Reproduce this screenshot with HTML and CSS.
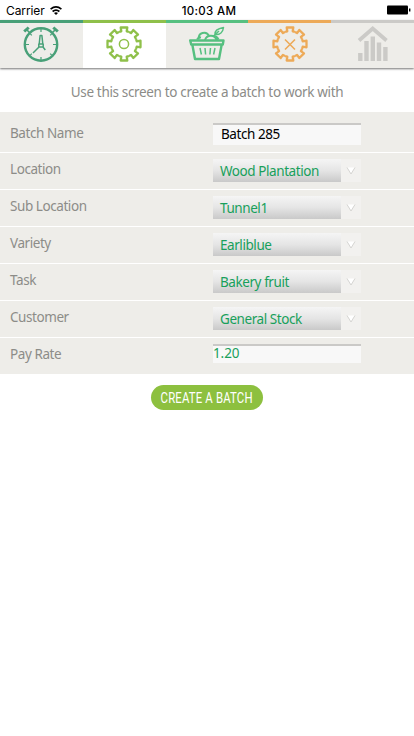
FILE: index.html
```html
<!DOCTYPE html>
<html lang="en">
<head>
    <meta charset="utf-8">
    <title>Create a batch</title>
    <link rel="stylesheet" href="styles.css">
</head>
<body>

<div class="status">
    <div class="carrier">
        <span>Carrier</span>
        <svg width="12" height="9" viewBox="0 0 12 9" fill="none" stroke="#000" stroke-width="1.7">
            <path d="M.6 3.2Q6-1.3 11.4 3.2M2.6 5.5Q6 2.7 9.4 5.5"/>
            <path d="M4 7Q6 5.4 8 7L6 9z" fill="#000" stroke="none"/>
        </svg>
    </div>
    <div class="time">10:03 AM</div>
    <svg class="battery" width="25" height="10" viewBox="0 0 25 10">
        <rect y=".5" width="21" height="9" rx="1"/>
        <rect x="22" y="3.5" width="1.4" height="3"/>
    </svg>
</div>

<div class="tabs">
    <a class="tab tab-clock">
        <svg width="36" height="36" viewBox="-18 -18 36 36">
            <circle r="16.2" cy=".5" stroke-width="2.4"/>
            <path stroke-width="3" d="M-16.8-12.5L-12.3-16.5M16.8-12.5L12.3-16.5"/>
            <path stroke-width="1.6" d="M-14.500-14.500L-11-11M14.500-14.500L11-11"/>
            <path stroke-width="1.2" d="M0-15v3M0 16v-3M-15 .5h3M15 .5h-3M-10.6-10l1.4 1.4M10.6-10l-1.4 1.4M10.6 11l-1.4-1.4M-10.6 11l1.4-1.4"/>
            <path stroke-width="1.5" d="M-1.8 0L-.9-8.500H.9L1.8 0M-2.2 0h4.4v3h-4.4zM-2 3L-8 9M2 3L4.3 6"/>
        </svg>
    </a>
    <a class="tab tab-batch active">
        <svg width="36" height="36" viewBox="-18 -18 36 36">
            <defs>
                <path id="tooth" d="M-4.97-12A13 13 0 0 1-2.7-12.7L-3.3-16.5H3.3L2.7-12.7A13 13 0 0 1 4.97-12"/>
                <g id="gear">
                    <use href="#tooth"/>
                    <use href="#tooth" transform="rotate(45)"/>
                    <use href="#tooth" transform="rotate(90)"/>
                    <use href="#tooth" transform="rotate(135)"/>
                    <use href="#tooth" transform="rotate(180)"/>
                    <use href="#tooth" transform="rotate(225)"/>
                    <use href="#tooth" transform="rotate(270)"/>
                    <use href="#tooth" transform="rotate(315)"/>
                </g>
            </defs>
            <use href="#gear"/>
            <circle r="4.6" stroke-width="1.5"/>
        </svg>
    </a>
    <a class="tab tab-basket">
        <svg width="36" height="36" viewBox="0 0 36 36">
            <path stroke-width="2.4" d="M1.2 14.500H34.500L33.800 18.500H2.200zM3.300 18.500L6 33H30L32.700 18.500"/>
            <path stroke-width="2" d="M10 13.500C8.500 6.500 17.500 4.500 20 10M16 14C17.500 8.500 26 8 27.500 14M8 13.500Q9 11 12 11.500M24 10Q27.500 9.500 29.500 13.500"/>
            <path stroke-width="1.5" d="M26 8.500C25.500 4.500 29 2.500 34.500 1.500C34 6 31 9 26 8.500L24.500 10.500M26 8.500L30 5"/>
            <path stroke-width="1.5" d="M11 22l1.400 6.500M16 22l.6 6.500M26 22l-1.400 6.500M21.500 22l-.6 6.500"/>
        </svg>
    </a>
    <a class="tab tab-stop">
        <svg width="36" height="36" viewBox="-18 -18 36 36">
            <use href="#gear"/>
            <path stroke-width="1.6" d="M-5-4.500L5 5.500M5-4.500L-5 5.500"/>
        </svg>
    </a>
    <a class="tab tab-stats">
        <svg width="36" height="36" viewBox="0 0 36 36">
            <path stroke-width="3.8" d="M4 14.500L17.700 2.600L31.500 14.500"/>
            <path stroke-width="4.400" d="M5.300 35V27M11.500 35V15M17.800 35V10.500M24 35V16.500M30.400 35V21"/>
        </svg>
    </a>
</div>

<p class="intro">Use this screen to create a batch to work with</p>

<div class="form">
    <div class="row row-name">
        <span class="label">Batch Name</span>
        <span class="field">Batch 285</span>
    </div>
    <div class="row">
        <span class="label">Location</span>
        <span class="select"><span class="value">Wood Plantation</span><svg class="arrow" viewBox="0 0 20 23"><path d="M6.500 8.500h7l-3.500 6z"/><path class="edge" d="M6 8.500l4 6.500 4-6.500"/></svg></span>
    </div>
    <div class="row">
        <span class="label">Sub Location</span>
        <span class="select"><span class="value">Tunnel1</span><svg class="arrow" viewBox="0 0 20 23"><path d="M6.500 8.500h7l-3.500 6z"/><path class="edge" d="M6 8.500l4 6.500 4-6.500"/></svg></span>
    </div>
    <div class="row">
        <span class="label">Variety</span>
        <span class="select"><span class="value">Earliblue</span><svg class="arrow" viewBox="0 0 20 23"><path d="M6.500 8.500h7l-3.500 6z"/><path class="edge" d="M6 8.500l4 6.500 4-6.500"/></svg></span>
    </div>
    <div class="row">
        <span class="label">Task</span>
        <span class="select"><span class="value">Bakery fruit</span><svg class="arrow" viewBox="0 0 20 23"><path d="M6.500 8.500h7l-3.500 6z"/><path class="edge" d="M6 8.500l4 6.500 4-6.500"/></svg></span>
    </div>
    <div class="row">
        <span class="label">Customer</span>
        <span class="select"><span class="value">General Stock</span><svg class="arrow" viewBox="0 0 20 23"><path d="M6.500 8.500h7l-3.500 6z"/><path class="edge" d="M6 8.500l4 6.500 4-6.500"/></svg></span>
    </div>
    <div class="row row-rate">
        <span class="label">Pay Rate</span>
        <span class="field">1.20</span>
    </div>
</div>

<a class="create"><span>CREATE A BATCH</span></a>

</body>
</html>
```
FILE: styles.css
```css
* { box-sizing: border-box; }
body { margin: 0; background: #fff; font-family: "Noto Sans", sans-serif; font-size: 13.5px; letter-spacing: -0.43px; color: #8c8c88; }

.status { display: grid; grid-template-columns: 1fr auto 1fr; align-items: center; height: 20px; padding: 0 6px; font-family: Inter, sans-serif; font-size: 12px; letter-spacing: 0; color: #000; }
.carrier { display: flex; align-items: center; gap: 5px; padding-top: 1px; }
.carrier span { letter-spacing: -0.1px; }
.time { font-weight: 500; font-size: 11.500px; letter-spacing: 0.3px; padding: 2px 0 0 4px; }
.battery { justify-self: end; margin-right: -4px; }

.tabs { display: grid; grid-template-columns: repeat(5, 1fr); height: 48px; background: #eeede9; box-shadow: 0 1px 2px rgba(0, 0, 0, 0.55); }
.tab { display: flex; justify-content: center; padding-top: 3px; border-top: 3px solid; }
.tab svg { fill: none; stroke: currentColor; stroke-width: 2.3; stroke-linejoin: round; }
.tab-clock { color: #48a078; }
.tab-batch { color: #8fc04a; }
.tab-basket { color: #56c080; }
.tab-stop { color: #edaa58; }
.tab-stats { color: #cbcac7; }
.tab-stats svg { stroke-linejoin: miter; }
.tab.active { background: #fff; }

.intro { margin: 0; height: 44px; line-height: 48px; text-align: center; letter-spacing: -0.34px; white-space: nowrap; }

.form { background: #eeede9; }
.row { display: flex; height: 37px; padding: 6px 0 0 10px; border-bottom: 1px solid #fff; }
.row-name { height: 41px; padding-top: 11px; }
.row-rate { height: 36px; border-bottom: none; }
.label { width: 203px; line-height: 20px; }
.select { display: flex; width: 148px; height: 23px; background: #f2f1ef; color: #18a05b; }
.value { width: 128px; padding-left: 7px; line-height: 24px; background: linear-gradient(#f5f5f5, #e5e5e5 50%, #c9c9c9); white-space: nowrap; }
.arrow { width: 20px; height: 23px; fill: #fff; }
.arrow .edge { fill: none; stroke: #c9c8c6; stroke-width: 0.7; }
.field { width: 148px; height: 22px; border-top: 2px solid #cac9c7; background: #f8f8f8; }
.row-name .field { padding-left: 8px; line-height: 19px; color: #000; }
.row-rate .field { height: 19px; line-height: 15px; letter-spacing: -0.1px; color: #18a05b; }

.create { display: flex; align-items: center; justify-content: center; width: 112px; height: 25px; margin: 11px 0 0 151px; border-radius: 13px; background: #8dc03f; color: #fff; }
.create span { font-family: Roboto, sans-serif; font-size: 15px; letter-spacing: 0.2px; white-space: nowrap; transform: scaleX(0.76); }
```
